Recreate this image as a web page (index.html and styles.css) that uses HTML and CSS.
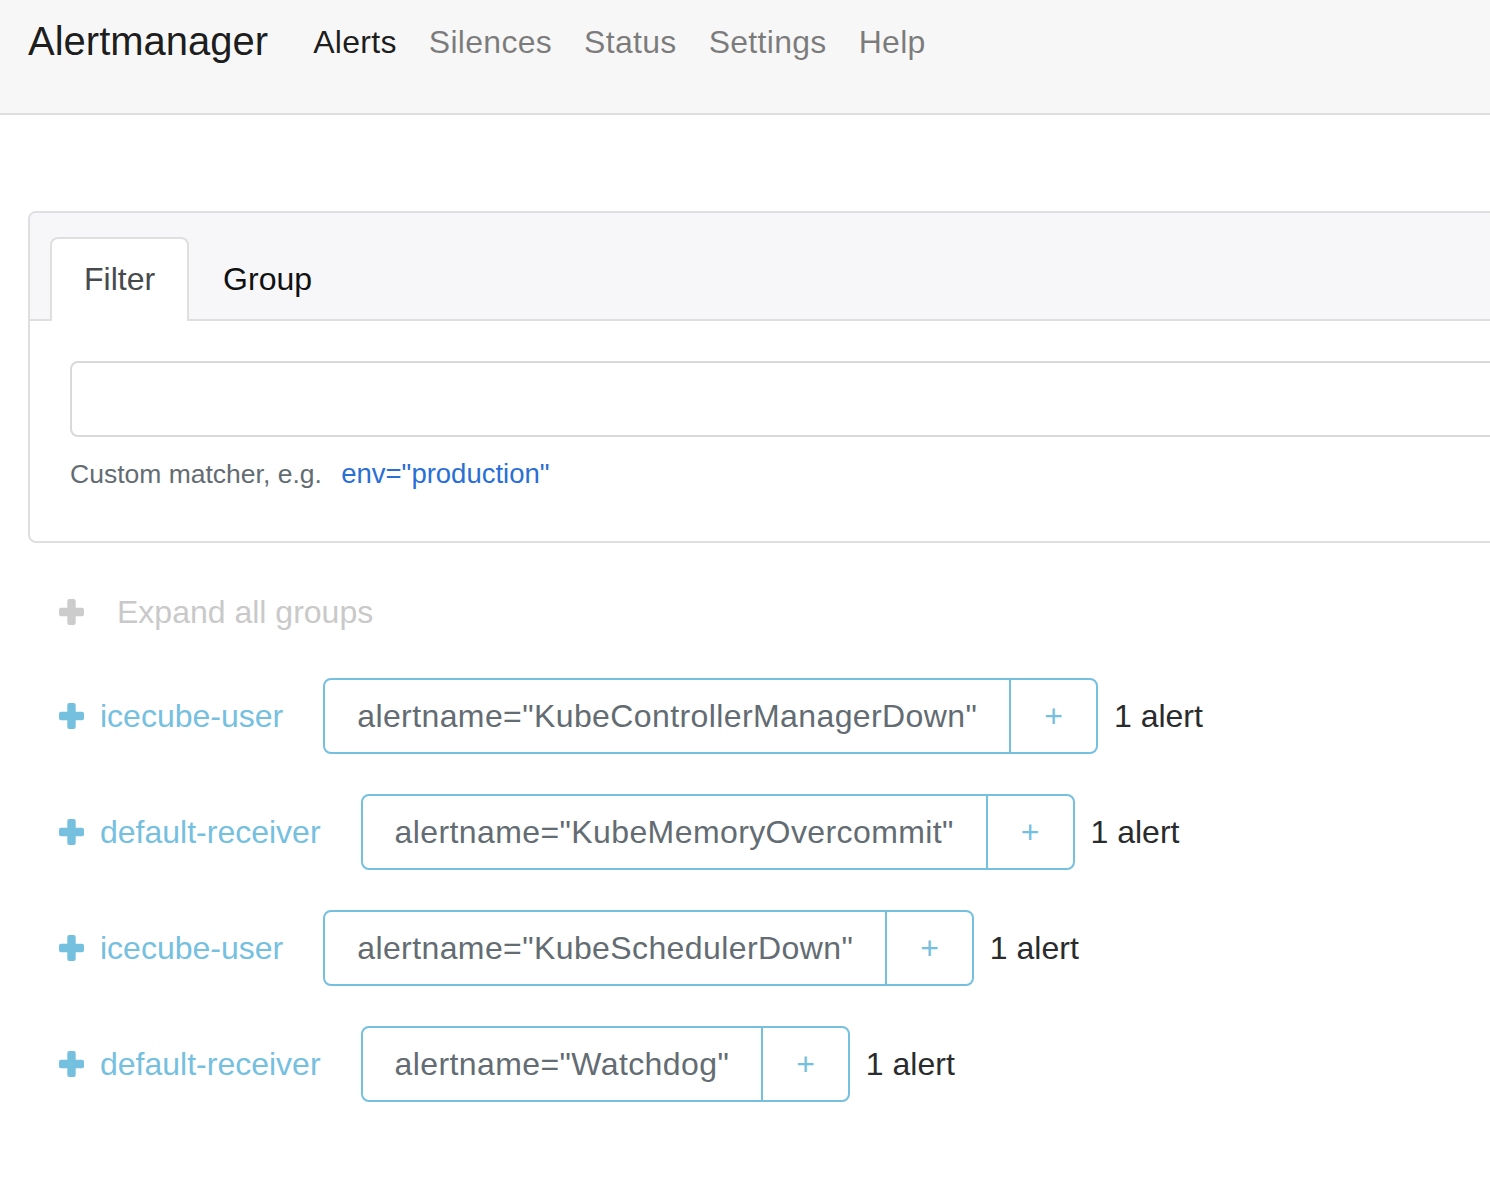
FILE: index.html
```html
<!DOCTYPE html>
<html lang="en">
<head>
<meta charset="utf-8">
<title>Alertmanager</title>
<link rel="stylesheet" href="styles.css">
</head>
<body>
<nav class="navbar">
  <a class="brand" href="#">Alertmanager</a>
  <ul class="nav">
    <li><a class="nav-link active" href="#">Alerts</a></li>
    <li><a class="nav-link" href="#">Silences</a></li>
    <li><a class="nav-link" href="#">Status</a></li>
    <li><a class="nav-link" href="#">Settings</a></li>
    <li><a class="nav-link" href="#">Help</a></li>
  </ul>
</nav>

<main class="container">
  <section class="card">
    <div class="card-header">
      <ul class="tabs">
        <li><a class="tab active" href="#">Filter</a></li>
        <li><a class="tab" href="#">Group</a></li>
      </ul>
    </div>
    <div class="card-body">
      <input class="form-control" type="text">
      <p class="help">Custom matcher, e.g. <a class="example" href="#">env="production"</a></p>
    </div>
  </section>

  <div class="expand-all">
    <svg class="plus" viewBox="0 0 25 26"><rect x="8.3" y="0" width="8.4" height="26" rx="2"/><rect x="0" y="8.8" width="25" height="8.4" rx="2"/></svg>
    <span class="expand-text">Expand all groups</span>
  </div>

  <div class="groups">
    <div class="group-row">
      <svg class="plus info" viewBox="0 0 25 26"><rect x="8.3" y="0" width="8.4" height="26" rx="2"/><rect x="0" y="8.8" width="25" height="8.4" rx="2"/></svg>
      <a class="receiver" href="#">icecube-user</a>
      <div class="btn-group">
        <button class="btn label">alertname="KubeControllerManagerDown"</button>
        <button class="btn add">+</button>
      </div>
      <span class="count">1 alert</span>
    </div>
    <div class="group-row">
      <svg class="plus info" viewBox="0 0 25 26"><rect x="8.3" y="0" width="8.4" height="26" rx="2"/><rect x="0" y="8.8" width="25" height="8.4" rx="2"/></svg>
      <a class="receiver" href="#">default-receiver</a>
      <div class="btn-group">
        <button class="btn label">alertname="KubeMemoryOvercommit"</button>
        <button class="btn add">+</button>
      </div>
      <span class="count">1 alert</span>
    </div>
    <div class="group-row">
      <svg class="plus info" viewBox="0 0 25 26"><rect x="8.3" y="0" width="8.4" height="26" rx="2"/><rect x="0" y="8.8" width="25" height="8.4" rx="2"/></svg>
      <a class="receiver" href="#">icecube-user</a>
      <div class="btn-group">
        <button class="btn label">alertname="KubeSchedulerDown"</button>
        <button class="btn add">+</button>
      </div>
      <span class="count">1 alert</span>
    </div>
    <div class="group-row">
      <svg class="plus info" viewBox="0 0 25 26"><rect x="8.3" y="0" width="8.4" height="26" rx="2"/><rect x="0" y="8.8" width="25" height="8.4" rx="2"/></svg>
      <a class="receiver" href="#">default-receiver</a>
      <div class="btn-group">
        <button class="btn label">alertname="Watchdog"</button>
        <button class="btn add">+</button>
      </div>
      <span class="count">1 alert</span>
    </div>
  </div>
</main>
</body>
</html>
```

FILE: styles.css
```css
html, body {
  margin: 0;
  padding: 0;
  overflow-x: hidden;
}
body {
  font-family: "Liberation Sans", Arial, Helvetica, sans-serif;
  font-size: 32px;
  line-height: 1.5;
  color: #292b2c;
  background: #fff;
}
a { text-decoration: none; }

/* navbar */
.navbar {
  display: flex;
  align-items: flex-start;
  height: 113px;
  background: #f7f7f7;
  border-bottom: 2px solid #dedede;
  padding-left: 28px;
  box-sizing: content-box;
}
.brand {
  font-size: 40px;
  line-height: 60px;
  margin-top: 11px;
  margin-right: 29px;
  color: rgba(0,0,0,.9);
}
.nav {
  display: flex;
  list-style: none;
  margin: 18px 0 0;
  padding: 0;
}
.nav-link {
  display: block;
  padding: 0 16px;
  line-height: 48px;
  color: rgba(0,0,0,.5);
  letter-spacing: 0.3px;
}
.nav-link.active { color: rgba(0,0,0,.9); }

/* main */
.container {
  padding: 96px 0 60px 28px;
}
.card {
  width: 1700px;
  border: 2px solid #dfdfdf;
  border-radius: 8px;
  background: #fff;
}
.card-header {
  background: #f7f7f9;
  border-bottom: 2px solid #dfdfdf;
  border-radius: 6px 6px 0 0;
  padding: 24px 40px 0 20px;
  height: 82px;
}
.tabs {
  display: flex;
  list-style: none;
  margin: 0;
  padding: 0;
}
.tab {
  display: block;
  padding: 16px 32px;
  line-height: 48px;
  border: 2px solid transparent;
  border-bottom: none;
  border-radius: 8px 8px 0 0;
  color: #111;
  height: 82px;
  box-sizing: border-box;
}
.tab.active {
  background: #fff;
  color: #464a4c;
  border-color: #dfdfdf;
  height: 84px;
}
.card-body {
  padding: 40px 40px 48px;
}
.form-control {
  display: block;
  width: 100%;
  box-sizing: border-box;
  height: 76px;
  border: 2px solid #d9d9d9;
  border-radius: 8px;
  font: inherit;
  padding: 16px 24px;
  background: #fff;
}
.help {
  margin: 18px 0 0;
  font-size: 26.5px;
  line-height: 38px;
  color: #636c72;
}
.example {
  color: #2a6fd4;
  margin-left: 12px;
  font-size: 27.5px;
}

/* expand */
.expand-all {
  display: flex;
  align-items: center;
  height: 48px;
  margin-top: 45px;
  padding-left: 31px;
}
.plus {
  width: 25px;
  height: 26px;
  fill: #cccccc;
  flex: none;
}
.plus.info { fill: #76c0df; }
.expand-text {
  margin-left: 33px;
  color: #c9c9c9;
}

/* groups */
.groups {
  display: flex;
  flex-direction: column;
  gap: 40px;
  margin-top: 42px;
  padding-left: 31px;
}
.group-row {
  display: flex;
  align-items: center;
  height: 76px;
}
.receiver {
  margin-left: 16px;
  color: #76c0df;
}
.btn-group {
  display: flex;
  margin-left: 40px;
}
.btn {
  font: inherit;
  line-height: 48px;
  padding: 12px 32px;
  border: 2px solid #76c0df;
  background: #fff;
  color: #636c72;
  cursor: pointer;
}
.btn.label {
  border-radius: 8px 0 0 8px;
  letter-spacing: 0.4px;
}
.btn.add {
  margin-left: -2px;
  border-radius: 0 8px 8px 0;
  color: #76c0df;
  font-size: 32px;
  padding: 12px 33px;
}
.count {
  margin-left: 16px;
  color: #292b2c;
}
```
